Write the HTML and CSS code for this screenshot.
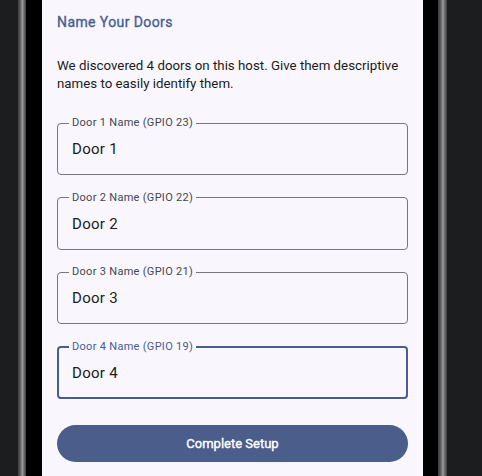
FILE: index.html
```html
<!DOCTYPE html>
<html lang="en">
<head>
    <meta charset="UTF-8">
    <meta name="viewport" content="width=device-width, initial-scale=1.0">
    <title>Name Your Doors</title>
    <link rel="stylesheet" href="styles.css">
</head>
<body>
    <div class="device">
        <div class="bezel"></div>
        <div class="rim"></div>
        <div class="screen">
            <h2 class="title">Name Your Doors</h2>
            <p class="intro">We discovered 4 doors on this host. Give them descriptive names to easily identify them.</p>

            <div class="fields">
                <fieldset class="field">
                    <legend>Door 1 Name (GPIO 23)</legend>
                    <input type="text" value="Door 1">
                </fieldset>
                <fieldset class="field">
                    <legend>Door 2 Name (GPIO 22)</legend>
                    <input type="text" value="Door 2">
                </fieldset>
                <fieldset class="field">
                    <legend>Door 3 Name (GPIO 21)</legend>
                    <input type="text" value="Door 3">
                </fieldset>
                <fieldset class="field focused">
                    <legend>Door 4 Name (GPIO 19)</legend>
                    <input type="text" value="Door 4">
                </fieldset>
            </div>

            <button class="primary">Complete Setup</button>
        </div>
        <div class="rim rim-right"></div>
        <div class="bezel bezel-right"></div>
    </div>
</body>
</html>
```

FILE: styles.css
```css
body {
    background-color: #1c1d1f;
    font-family: Roboto, "Noto Sans", sans-serif;
    margin: 0;
    padding: 0 0 0 18px;
    height: 476px;
    overflow: hidden;
}

.device {
    display: flex;
    height: 100%;
    width: 429px;
}

.bezel {
    width: 8px;
    background: linear-gradient(to right, #3a3a3c, #5e5e60 30%, #9a9a9c 55%, #6a6a6c 75%, #3c3c3e);
}

.bezel-right {
    width: 9px;
}

.rim {
    width: 16px;
    background-color: #000;
}

.rim-right {
    width: 15px;
}

.screen {
    flex: 1;
    background-color: #f9f7fd;
    padding: 12px 15px 0;
}

/* no medium cut of Roboto here, so thicken the regular one a little */
.title {
    margin: 0;
    font-size: 14px;
    line-height: 20px;
    font-weight: 400;
    letter-spacing: 0.4px;
    -webkit-text-stroke: 0.35px currentColor;
    color: #485d92;
}

.intro {
    margin: 25px 0 0;
    font-size: 13.3px;
    line-height: 18px;
    color: #1b1b21;
}

.fields {
    display: flex;
    flex-direction: column;
    gap: 15.5px;
    margin-top: 23px;
}

.field {
    margin: 0;
    padding: 0 14px 13px;
    border: 1px solid #767680;
    border-radius: 4px;
}

.field legend {
    padding: 0 3px;
    margin-left: -3px;
    font-size: 11px;
    line-height: 14px;
    letter-spacing: 0.3px;
    color: #45464f;
}

.field input {
    display: block;
    width: 100%;
    height: 24px;
    margin-top: 7px;
    padding: 0;
    border: none;
    outline: none;
    background: transparent;
    font-family: inherit;
    font-size: 15px;
    letter-spacing: 0.3px;
    color: #1b1b21;
}

.field.focused {
    border: 2px solid #485d92;
    padding: 0 13px 12px;
}

.field.focused legend {
    color: #485d92;
}

.primary {
    display: block;
    width: 100%;
    height: 37px;
    margin-top: 26px;
    border: none;
    border-radius: 18.5px;
    background-color: #4b5d8b;
    color: #fff;
    font-family: inherit;
    font-size: 13px;
    font-weight: 400;
    -webkit-text-stroke: 0.35px currentColor;
}
```
